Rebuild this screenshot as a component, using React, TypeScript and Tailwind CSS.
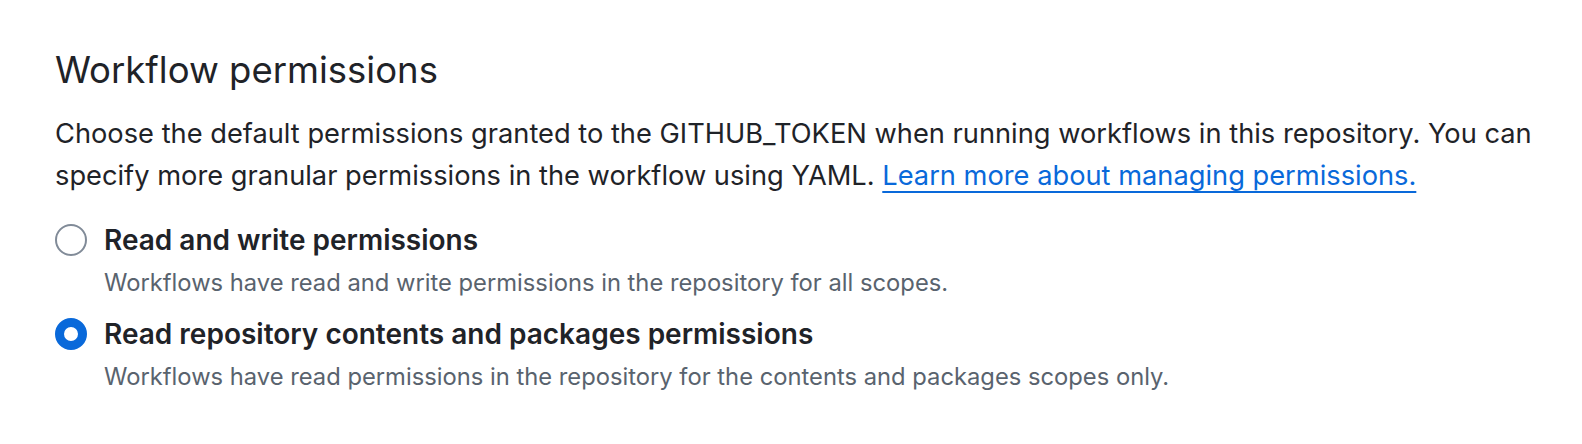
import React from "react";

function Radio({ checked }: { checked: boolean }) {
  return checked ? (
    <span className="box-border block h-[32px] w-[32px] shrink-0 rounded-full border-[9px] border-[#0969da] bg-white" />
  ) : (
    <span className="box-border block h-[32px] w-[32px] shrink-0 rounded-full border-2 border-[#818b98] bg-white" />
  );
}

function Option({ checked, label, desc }: { checked: boolean; label: string; desc: string }) {
  return (
    <div className="flex items-start gap-[17px]">
      <div className="flex h-[42px] items-center">
        <Radio checked={checked} />
      </div>
      <div className="flex flex-col">
        <div className="text-[28px] font-semibold leading-[42px] text-[#1f2328]">{label}</div>
        <div className="mt-[4px] text-[23.75px] leading-[36px] text-[#59636e]">{desc}</div>
      </div>
    </div>
  );
}

export default function App() {
  return (
    <div
      className="h-[444px] w-[1582px] bg-white pl-[55px] pt-[40px]"
      style={{ fontFamily: "Inter, 'Noto Sans', sans-serif" }}
    >
      <h2 className="text-[36.5px] font-normal leading-[60px] text-[#1f2328]">Workflow permissions</h2>
      <p className="mt-[13px] text-[27.25px] leading-[42px] text-[#1f2328]">
        Choose the default permissions granted to the GITHUB_TOKEN when running workflows in this repository. You can
        <br />
        specify more granular permissions in the workflow using YAML.{" "}
        <a href="#" className="text-[#0969da] underline underline-offset-[6px] decoration-[2px]">
          Learn more about managing permissions.
        </a>
      </p>
      <div className="mt-[22px] flex flex-col gap-[12px]">
        <Option
          checked={false}
          label="Read and write permissions"
          desc="Workflows have read and write permissions in the repository for all scopes."
        />
        <Option
          checked={true}
          label="Read repository contents and packages permissions"
          desc="Workflows have read permissions in the repository for the contents and packages scopes only."
        />
      </div>
    </div>
  );
}
